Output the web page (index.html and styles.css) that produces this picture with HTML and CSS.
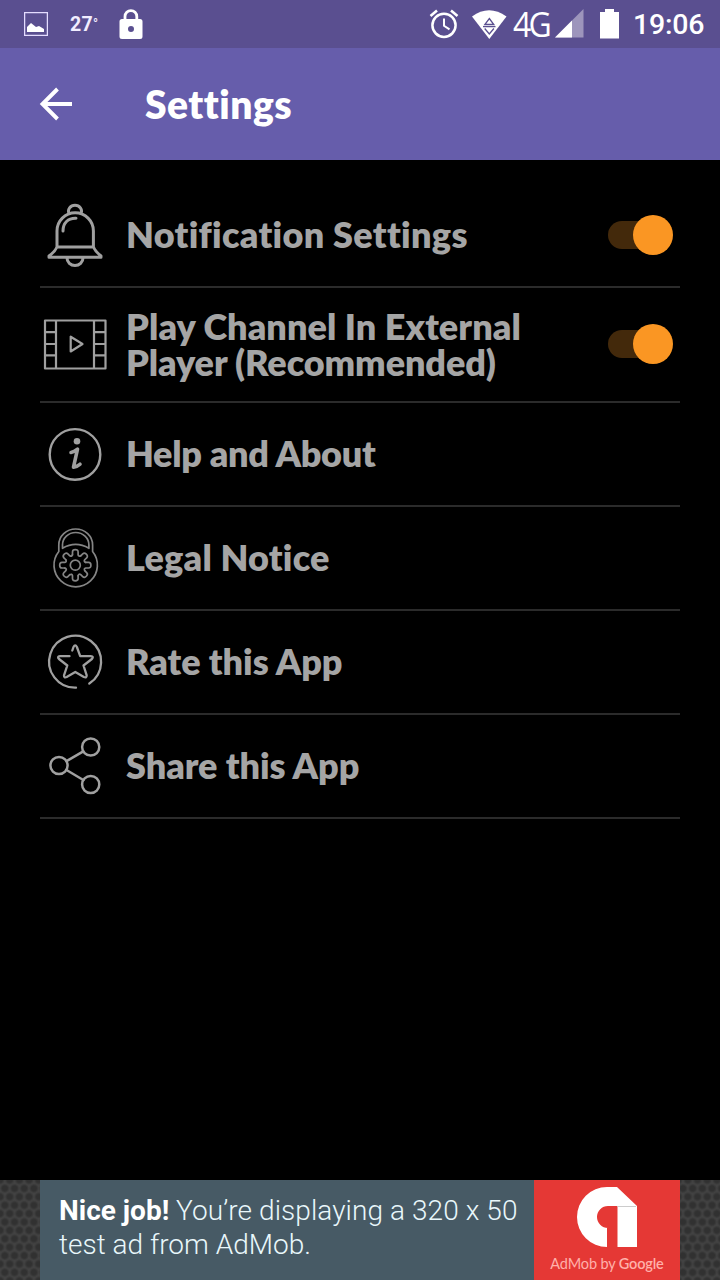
FILE: index.html
```html
<!DOCTYPE html>
<html lang="en">
<head>
<meta charset="utf-8">
<title>Settings</title>
<link rel="stylesheet" href="styles.css">
</head>
<body>
<div class="screen">
  <div class="status">
    <svg class="status-image" width="24" height="24" viewBox="0 0 24 24"><rect x=".6" y=".6" width="22.8" height="22.8" fill="none" stroke="#e4dcff" stroke-width="1.3"/><path d="M3 20v-5l4-4 5 4 3-1 5 3v3z" fill="#fff"/></svg>
    <span class="temp">27<span class="degree">°</span></span>
    <svg class="status-lock" width="24" height="30" viewBox="0 0 24 30"><path d="M6 11V7.500a5.900 5.900 0 0 1 11.800 0V11" fill="none" stroke="#fff" stroke-width="2.800"/><path fill-rule="evenodd" fill="#fff" d="M3 10h18q2.500 0 2.500 2.500v15q0 2.500-2.500 2.500H3Q.5 30 .5 27.500v-15Q.5 10 3 10zm9 7a3 3 0 1 0 0 6 3 3 0 0 0 0-6z"/></svg>
    <svg class="status-alarm" width="30" height="30" viewBox="0 0 30 30" fill="none" stroke="#fff"><circle cx="15" cy="16.300" r="11.600" stroke-width="2.500"/><path d="M15 9.500v7.300l5.500 3.500" stroke-width="2"/><path d="M1.500 7 8 1.500M22 1.500 28.500 7" stroke-width="2.600"/></svg>
    <svg class="status-wifi" width="35" height="30" viewBox="0 0 35 30"><path d="M0 6.500Q17-6 34.500 6.500L17.300 29z" fill="#fff"/><path d="m17.300 8.500 4.500 6h-9zM11 16.700h12.500M12.700 18.500l4.600 5.500 4.600-5.500" fill="none" stroke="#5a4f90" stroke-width="1.300"/></svg>
    <span class="network">4G</span>
    <svg class="status-signal" width="29" height="29" viewBox="0 0 29 29"><path d="M28.500 0v28.500H0z" fill="#9d95bc"/><path d="M17 11.500v17H0z" fill="#fff"/></svg>
    <svg class="status-battery" width="19" height="30" viewBox="0 0 19 30"><path d="M5 0h9v3h5v26.500H0V3h5z" fill="#fff"/></svg>
    <span class="clock">19:06</span>
  </div>

  <header class="appbar">
    <svg width="34" height="34" viewBox="0 0 34 34" fill="none" stroke="#fff" stroke-width="3.900"><path d="M33 17H4M18.500 2 3.500 17l15 15"/></svg>
    <h1 class="title">Settings</h1>
  </header>

  <main class="list">
    <div class="row">
      <svg class="icon" viewBox="0 0 70 70" stroke-width="3"><path d="M29 13.500a6.500 6 0 1 1 12 0M17 47V31a18.200 18.200 0 0 1 36.400 0v16c1.500 3.500 4 6 7.600 9v1.200H9V56c4-3 6.500-5.500 8-9zM17 47h36.400M27 58a8 7.500 0 0 0 16 0"/><path d="M23 31c0-8 5-13 13-12.700"/></svg>
      <span class="label notify">Notification Settings</span>
      <span class="switch"><span class="thumb"></span></span>
    </div>
    <div class="row tall">
      <svg class="icon" viewBox="0 0 70 70" stroke-width="2.200"><path d="M5 11.500h60.500v48H5zM16 11.500v48M54 11.500v48M5 23.200h11M5 35h11M5 46.300h11M54 23.200h11.500M54 35h11.500M54 46.300h11.500M30.700 27.700v14.800L42.500 35z"/></svg>
      <span class="label"><span class="channel">Play Channel In External</span><br><span class="player">Player (Recommended)</span></span>
      <span class="switch"><span class="thumb"></span></span>
    </div>
    <div class="row">
      <svg class="icon" viewBox="0 0 70 70" stroke-width="2.400"><circle cx="35" cy="35.400" r="25.300"/><circle cx="37" cy="22.200" r="3.300" fill="#a0a0a0" stroke="none"/><path d="M31 33.500q3-.5 6.500-3.300l-4 18q4-.7 6.500-3" stroke-width="3.600"/></svg>
      <span class="label help">Help and About</span>
    </div>
    <div class="row">
      <svg class="icon faint" viewBox="0 0 70 70" stroke-width="1.700"><path d="M18.800 28.500V22a16.900 16 0 0 1 33.800 0v6.500A21.700 21.700 0 1 1 18.800 28.500z"/><path d="M22.500 25.300V22a13.200 12.500 0 0 1 26.400 0v3.300Q35.700 17.500 22.500 25.300z"/><circle cx="35.300" cy="42.200" r="5"/><g transform="translate(35.300 42.200)"><path id="tooth" d="M-2.800-10.500v-2.800q0-2.300 2.800-2.300t2.800 2.300v2.800q.5 2.200 2.600 1.050"/><use href="#tooth" transform="rotate(45)"/><use href="#tooth" transform="rotate(90)"/><use href="#tooth" transform="rotate(135)"/><use href="#tooth" transform="rotate(180)"/><use href="#tooth" transform="rotate(225)"/><use href="#tooth" transform="rotate(270)"/><use href="#tooth" transform="rotate(315)"/></g></svg>
      <span class="label legal">Legal Notice</span>
    </div>
    <div class="row">
      <svg class="icon" viewBox="0 0 70 70" stroke-width="2.300"><path d="M36 60.700A26 26 0 1 1 49.300 56.500"/><path d="M32.300 23.500l1.200-3.500q1.700-3.200 3.400 0l3.300 9.200h10.500q3.500.3 1.200 2.800L43.500 38.500l3.200 9.800q0 3-2.800 1.700L35.300 45l-8.600 5q-2.800 1.300-2.700-1.700l3.300-9.800L19 32q-2.300-2.500 1-2.800h9.500"/></svg>
      <span class="label rate">Rate this App</span>
    </div>
    <div class="row">
      <svg class="icon" viewBox="0 0 70 70" stroke-width="2.500"><circle cx="19" cy="34.500" r="8.600"/><circle cx="50.700" cy="16" r="8.600"/><circle cx="50.700" cy="53.500" r="8.600"/><path d="m26.500 30.200 16.800-9.900M26.500 39l16.800 10"/></svg>
      <span class="label share">Share this App</span>
    </div>
  </main>

  <footer class="ad-strip">
    <div class="ad">
      <p class="ad-text"><b>Nice job!</b> <span class="ad-first">You’re displaying a 320 x 50</span><br>test ad from AdMob.</p>
      <div class="admob">
        <svg width="60" height="60" viewBox="0 0 60 60"><path d="M40 0 60 19v41H40.500V19H31a11 11 0 0 0 0 22h-1v19A30 30 0 0 1 30 0z" fill="#fff"/><path d="M40.500 19.500H59" stroke="#ccc" stroke-width="1"/></svg>
        <span class="brand">AdMob by <span class="google">Google</span></span>
      </div>
    </div>
  </footer>
</div>
</body>
</html>
```
FILE: styles.css
```css
* { box-sizing: border-box; }
body { margin: 0; background: #000; }
.screen { width: 720px; height: 1280px; display: flex; flex-direction: column; background: #000; overflow: hidden; }

.status { height: 48px; display: flex; align-items: center; padding: 0 16px 0 24px; background: #5a4f90; color: #fff; font-family: Roboto, sans-serif; white-space: nowrap; }
.status svg { flex: none; }
.temp { width: 49px; margin-left: 22px; padding-top: 2px; font: 700 19.500px/24px Roboto, sans-serif; letter-spacing: .3px; color: #f1edff; }
.degree { font-size: 13px; vertical-align: 3px; line-height: 1; }
.status-lock { margin-right: auto; margin-bottom: 1px; }
.status-wifi { margin-left: 13px; margin-bottom: 4px; margin-top: 6px; }
.network { width: 42px; margin-left: 6px; font: 500 34px/50px "Open Sans", sans-serif; letter-spacing: -3px; transform: scaleX(.94); transform-origin: left; }
.status-signal { margin-bottom: 1px; }
.status-battery { margin-left: 16px; margin-bottom: 1px; }
.clock { margin-left: 14px; width: 71px; font: 500 28.500px/50px Roboto, sans-serif; letter-spacing: -.2px; padding-top: 2px; }

.appbar { height: 112px; display: flex; align-items: center; padding-left: 39px; background: #665dab; }
.title { margin: 0 0 0 72px; font: 800 39px/48px Lato, sans-serif; color: #fff; letter-spacing: .5px; }

.list { flex: 1; padding: 24px 40px 0; }
.row { height: 104px; display: flex; align-items: center; border-bottom: 2px solid #2b2b2b; padding-right: 7px; }
.tall { height: 115px; padding-bottom: 2px; }
.icon { width: 70px; height: 70px; flex: none; fill: none; stroke: #a0a0a0; stroke-linejoin: round; stroke-linecap: round; }
.faint { stroke: #858585; }
.label { flex: 1; margin-left: 16px; padding-bottom: 2px; font: 800 36px/36px Lato, sans-serif; font-variant-ligatures: none; color: #a5a5a5; white-space: nowrap; }
.tall .label { padding-bottom: 0; }
.notify { letter-spacing: .3px; }
.channel { letter-spacing: .07px; }
.player { letter-spacing: -.1px; }
.help { letter-spacing: -.3px; }
.legal { letter-spacing: .2px; }
.rate, .share { letter-spacing: -.05px; }
.switch { position: relative; width: 65px; height: 40px; flex: none; display: flex; justify-content: flex-end; }
.switch::before { content: ""; position: absolute; left: 0; top: 6px; width: 50px; height: 28px; border-radius: 14px; background: #43290b; }
.thumb { position: relative; width: 40px; height: 40px; border-radius: 50%; background: #fa9623; }

.ad-strip { height: 100px; padding: 0 40px; background-color: #424242; background-image: radial-gradient(circle at center, #313131 2.500px, transparent 4.800px), radial-gradient(circle at center, #313131 2.500px, transparent 4.800px); background-size: 9.700px 16.800px; background-position: 0 0, 4.850px 8.400px; }
.ad { height: 100px; display: flex; background: #475a65; }
.ad-text { flex: 1; margin: 0; padding: 14px 0 0 19px; font: 300 28px/33.500px Roboto, sans-serif; color: #e9f7fb; white-space: nowrap; }
.ad-first { letter-spacing: .08px; }
.ad-text b { font-weight: 700; color: #fff; }
.admob { width: 146px; display: flex; flex-direction: column; align-items: center; padding-top: 7px; background: #e53835; }
.brand { margin-top: 7px; font: 400 14.500px/20px Lato, sans-serif; letter-spacing: -.15px; color: #ffb0aa; white-space: nowrap; }
.google { font-weight: 600; }
```
